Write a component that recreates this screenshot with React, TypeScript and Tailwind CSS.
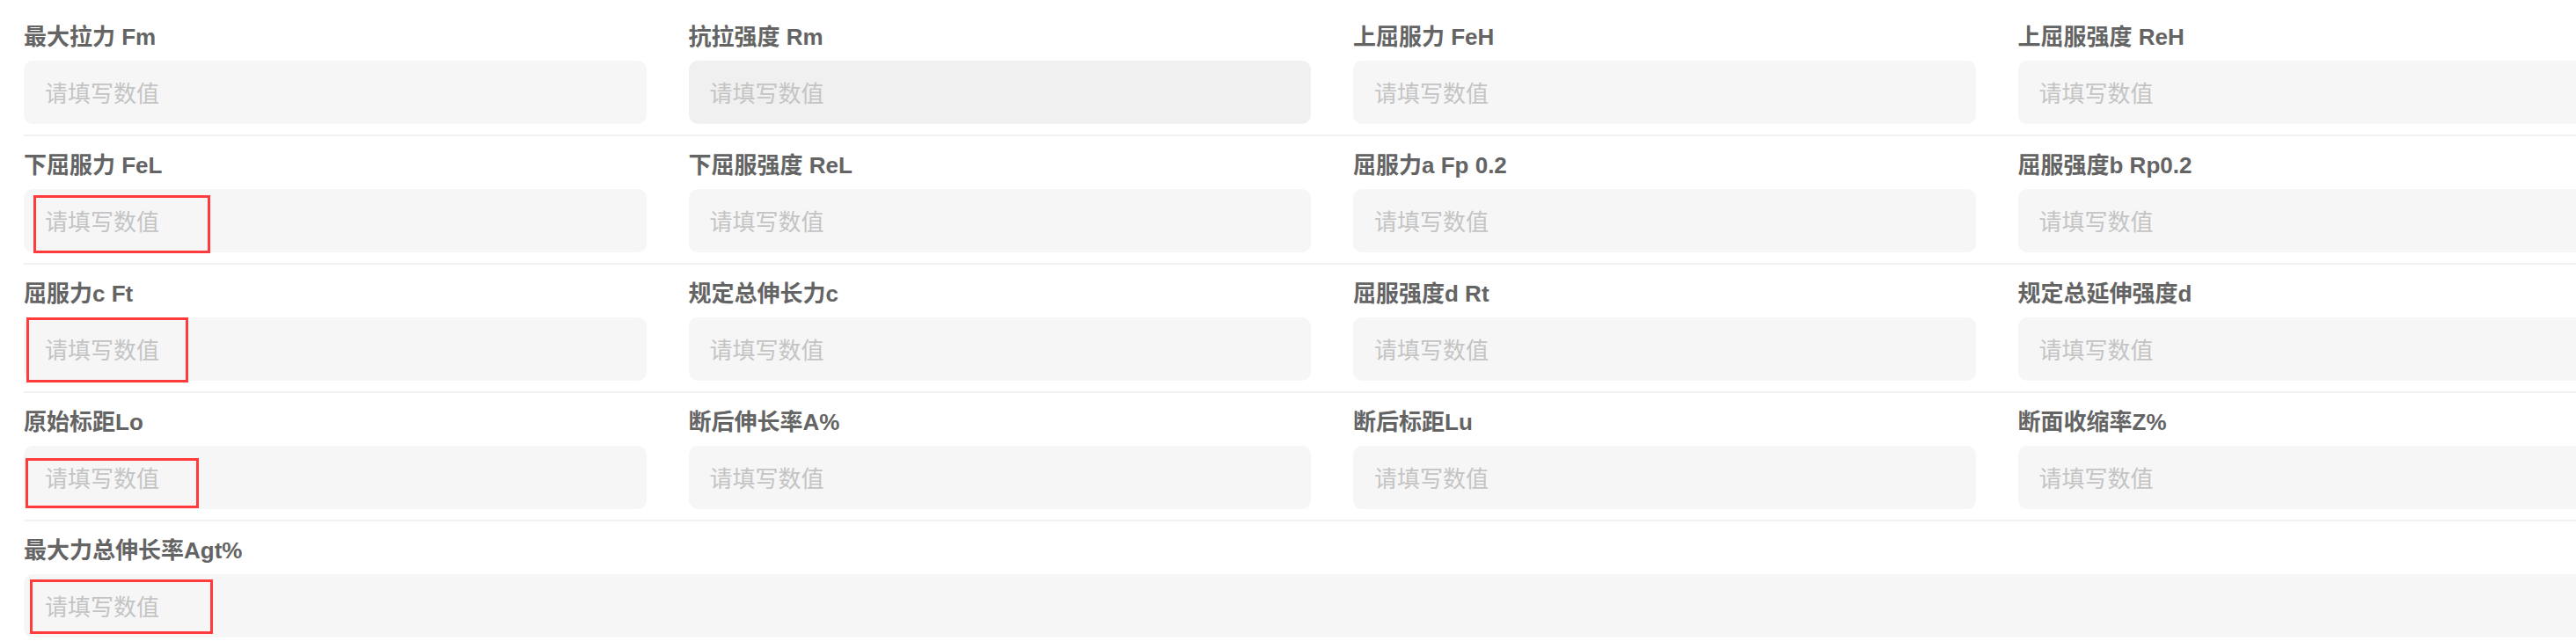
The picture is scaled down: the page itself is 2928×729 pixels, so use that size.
import React from 'react';

type Field = {
  label: string;
  disabled?: boolean;
  // marker drawn over the input, as in the screenshot
  mark?: string;
};

const rows: Field[][] = [
  [
    { label: '最大拉力 Fm' },
    { label: '抗拉强度 Rm', disabled: true },
    { label: '上屈服力 FeH' },
    { label: '上屈服强度 ReH' },
  ],
  [
    { label: '下屈服力 FeL', mark: 'left-[11px] top-[7px] w-[201px] h-[66px]' },
    { label: '下屈服强度 ReL' },
    { label: '屈服力a Fp 0.2' },
    { label: '屈服强度b Rp0.2' },
  ],
  [
    { label: '屈服力c Ft', mark: 'left-[3px] top-0 w-[184px] h-[74px]' },
    { label: '规定总伸长力c' },
    { label: '屈服强度d Rt' },
    { label: '规定总延伸强度d' },
  ],
  [
    { label: '原始标距Lo', mark: 'left-[2px] top-[14px] w-[197px] h-[57px]' },
    { label: '断后伸长率A%' },
    { label: '断后标距Lu' },
    { label: '断面收缩率Z%' },
  ],
];

const lastField: Field = {
  label: '最大力总伸长率Agt%',
  mark: 'left-[7px] top-[6px] w-[208px] h-[62px]',
};

function FieldCell({ field, wide }: { field: Field; wide?: boolean }) {
  return (
    <div className={wide ? 'col-span-4' : ''}>
      <div className="text-[26px] leading-[36px] font-bold text-[#646464] mb-[9px] whitespace-nowrap">
        {field.label}
      </div>
      <div className="relative">
        <input
          type="text"
          placeholder="请填写数值"
          disabled={field.disabled}
          className={`block h-[72px] w-full rounded-[10px] px-6 pt-[5px] text-[26px] text-[#333] placeholder:text-[#c4c4c4] outline-none ${
            field.disabled ? 'bg-[#f0f0f0]' : 'bg-[#f6f6f6]'
          }`}
        />
        {field.mark && (
          <div className={`pointer-events-none absolute border-[3px] border-[#ff3b3b] ${field.mark}`} />
        )}
      </div>
    </div>
  );
}

export default function App() {
  return (
    <div
      className="w-[2928px] h-[729px] overflow-hidden bg-white pl-[27px]"
      style={{ fontFamily: '"Liberation Sans", "Noto Sans CJK SC", sans-serif' }}
    >
      <div className="w-max">
        {rows.map((row, i) => (
          <div
            key={i}
            className={`grid grid-cols-[repeat(4,707.5px)] gap-x-12 border-b-2 border-[#f2f2f2] pb-3 ${
              i === 0 ? 'pt-6' : 'pt-[15px]'
            }`}
          >
            {row.map((f) => (
              <FieldCell key={f.label} field={f} />
            ))}
          </div>
        ))}
        <div className="grid grid-cols-[repeat(4,707.5px)] gap-x-12 pt-[15px]">
          <FieldCell field={lastField} wide />
        </div>
      </div>
    </div>
  );
}
